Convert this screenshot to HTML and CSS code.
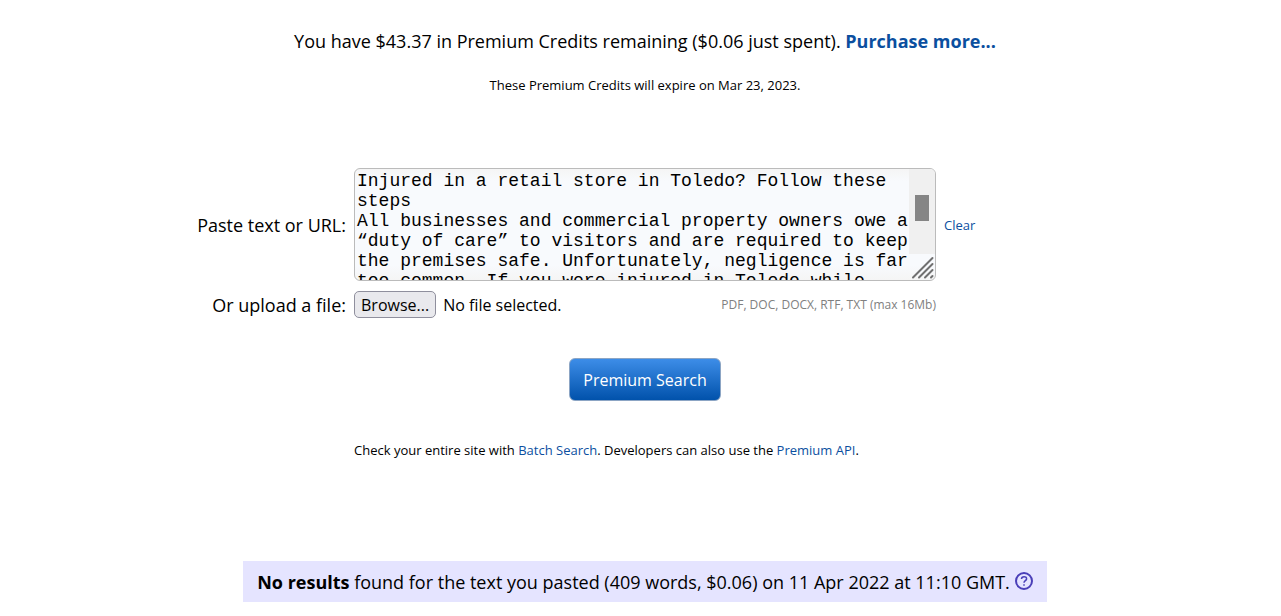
FILE: index.html
```html
<!DOCTYPE html>
<html lang="en">
<head>
<meta charset="UTF-8">
<meta name="viewport" content="width=device-width, initial-scale=1.0">
<title>Premium Search</title>
<link rel="stylesheet" href="styles.css">
</head>
<body>
<main class="page">
    <p class="credits">You have $43.37 in Premium Credits remaining ($0.06 just spent). <a class="purchase" href="#">Purchase more...</a></p>
    <p class="small expire">These Premium Credits will expire on Mar 23, 2023.</p>

    <form class="search-form">
        <label class="field-label" for="query">Paste text or URL:</label>
        <div class="text-field">
            <textarea class="query" id="query" name="q" spellcheck="false">Injured in a retail store in Toledo? Follow these steps
All businesses and commercial property owners owe a “duty of care” to visitors and are required to keep the premises safe. Unfortunately, negligence is far too common. If you were injured in Toledo while</textarea>
            <div class="scroll-track"><div class="scroll-thumb"></div></div>
            <svg class="grip" viewBox="0 0 26 26" aria-hidden="true">
                <path d="M4 23.5 L23.5 4 M10 23.5 L23.5 10 M16 23.5 L23.5 16 M22 23.5 L23.5 22" />
            </svg>
        </div>
        <a class="small clear" href="#">Clear</a>

        <label class="field-label" for="file">Or upload a file:</label>
        <div class="file-row">
            <div class="file-picker">
                <button class="browse" type="button" tabindex="-1">Browse...</button>
                <span>No file selected.</span>
                <input class="file-input" type="file" id="file" name="file">
            </div>
            <span class="formats">PDF, DOC, DOCX, RTF, TXT (max 16Mb)</span>
        </div>

        <button class="submit" type="submit">Premium Search</button>

        <p class="small more">Check your entire site with <a href="#">Batch Search</a>. Developers can also use the <a href="#">Premium API</a>.</p>
    </form>

    <div class="results">
        <span><b>No results</b> found for the text you pasted (409 words, $0.06) on 11 Apr 2022 at 11:10 GMT.</span>
        <a class="help" href="#" aria-label="Help">
            <svg viewBox="0 0 18 18">
                <circle cx="9" cy="9" r="8" />
                <path d="M6.5 7 C6.5 3.8 11.7 3.9 11.6 6.9 C11.5 8.6 9 8.8 9 10.8 M9 12.2 V13.7" />
            </svg>
        </a>
    </div>
</main>
</body>
</html>
```

FILE: styles.css
```css
body {
    margin: 0 0 0 9px;
    background: #fff;
    color: #000;
    font-family: "Open Sans", "Noto Sans", sans-serif;
    font-size: 18px;
    line-height: 24px;
}
p {
    margin: 0;
}
a {
    color: #0b4f9f;
    text-decoration: none;
}
a:hover {
    text-decoration: underline;
}
.page {
    display: flex;
    flex-direction: column;
    align-items: center;
    padding: 29px 0 14px;
}
.small {
    font-size: 13px;
    line-height: 18px;
}
.purchase {
    font-weight: bold;
}
.expire {
    margin-top: 23px;
}

.search-form {
    display: grid;
    grid-template-columns: 1fr minmax(0, 582px) 1fr;
    column-gap: 8px;
    row-gap: 10px;
    align-items: center;
    width: 100%;
    margin-top: 74px;
}
.field-label {
    text-align: right;
}
.text-field {
    position: relative;
    height: 113px;
}
.query {
    display: block;
    box-sizing: border-box;
    width: 100%;
    height: 100%;
    margin: 0;
    padding: 2px 26px 0 2px;
    border: 1px solid #bbb;
    border-radius: 6px;
    background: linear-gradient(#f5f5f5, #f8fafd 12px, #f8fafd 96px, #f5f5f5);
    color: #000;
    font-family: "Liberation Mono", monospace;
    font-size: 18px;
    line-height: 20px;
    overflow: hidden;
    resize: none;
}
.scroll-track {
    position: absolute;
    top: 1px;
    right: 1px;
    width: 26px;
    height: 85px;
    border-top-right-radius: 5px;
    background: #f0f0f0;
    pointer-events: none;
}
.scroll-thumb {
    width: 14px;
    height: 26px;
    margin: 26px auto 0;
    background: #858585;
}
.grip {
    position: absolute;
    right: 1px;
    bottom: 1px;
    width: 26px;
    height: 26px;
    fill: none;
    stroke: #707070;
    stroke-width: 2;
    stroke-linecap: round;
    pointer-events: none;
}

.file-row {
    display: flex;
    align-items: center;
    justify-content: space-between;
}
.file-picker {
    position: relative;
    display: flex;
    align-items: center;
    gap: 7px;
    font-size: 16px;
}
.browse {
    height: 27px;
    padding: 0 6px;
    border: 1px solid #8f8f9d;
    border-radius: 5px;
    background: #e9e9ed;
    color: #000;
    font-family: inherit;
    font-size: 16px;
    line-height: 24px;
}
.file-input {
    position: absolute;
    inset: 0;
    width: 100%;
    opacity: 0;
    cursor: pointer;
}
.formats {
    color: #808080;
    font-size: 12px;
    line-height: 18px;
}
.submit {
    grid-column: 2;
    justify-self: center;
    height: 43px;
    margin-top: 30px;
    padding: 0 13px;
    border: 1px solid #8ca5c4;
    border-radius: 6px;
    background: linear-gradient(#3d8de8, #0152ab);
    color: #fff;
    font-family: inherit;
    font-size: 16px;
    cursor: pointer;
}
.more {
    grid-column: 2;
    margin-top: 30px;
}

.results {
    display: flex;
    align-items: center;
    gap: 5px;
    margin-top: 102px;
    padding: 9px 14px 8px;
    background: #e5e4ff;
}
.help {
    height: 20px;
}
.help svg {
    display: block;
    width: 18px;
    height: 18px;
    fill: none;
    stroke: #4a3fb8;
    stroke-width: 2;
}
.help path {
    stroke-width: 1.5;
}
```
